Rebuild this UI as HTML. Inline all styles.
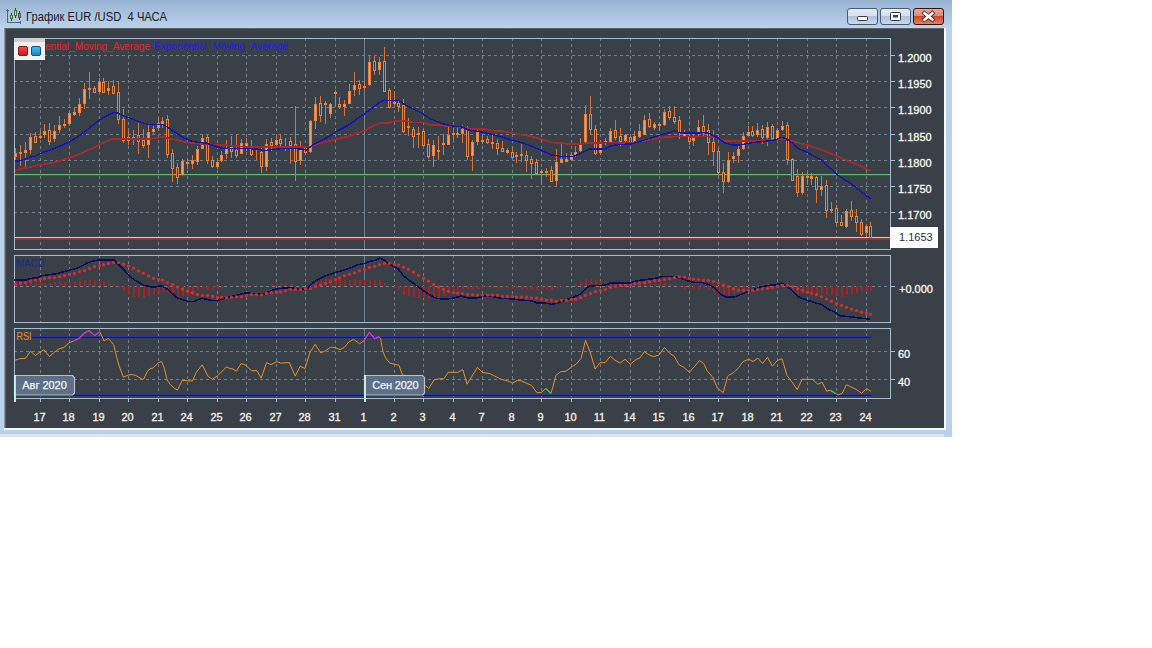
<!DOCTYPE html><html><head><meta charset="utf-8"><title>chart</title><style>
html,body{margin:0;padding:0;background:#fff;width:1152px;height:648px;overflow:hidden}
svg{position:absolute;left:0;top:0;font-family:"Liberation Sans",sans-serif}
</style></head><body>
<svg width="1152" height="648" viewBox="0 0 1152 648">
<defs>
<linearGradient id="tb" x1="0" y1="0" x2="0" y2="1"><stop offset="0" stop-color="#98b3d2"/><stop offset="1" stop-color="#bcd4ec"/></linearGradient>
<linearGradient id="btn" x1="0" y1="0" x2="0" y2="1"><stop offset="0" stop-color="#e4edf7"/><stop offset="0.45" stop-color="#d3e0ee"/><stop offset="0.5" stop-color="#aec2d8"/><stop offset="1" stop-color="#c9dbee"/></linearGradient>
<linearGradient id="cls" x1="0" y1="0" x2="0" y2="1"><stop offset="0" stop-color="#eca898"/><stop offset="0.45" stop-color="#e08a74"/><stop offset="0.5" stop-color="#c84a2c"/><stop offset="1" stop-color="#e0866a"/></linearGradient>
<linearGradient id="rsq" x1="0" y1="0" x2="0" y2="1"><stop offset="0" stop-color="#f05050"/><stop offset="1" stop-color="#c01818"/></linearGradient>
<linearGradient id="bsq" x1="0" y1="0" x2="0" y2="1"><stop offset="0" stop-color="#48bef2"/><stop offset="1" stop-color="#1684cc"/></linearGradient>
</defs>
<rect x="0" y="0" width="952" height="437" fill="#b9d1ea"/>
<rect x="0" y="0" width="952" height="29" fill="url(#tb)"/>
<rect x="0" y="434" width="944" height="3" fill="#dde7f1"/>
<rect x="4" y="28" width="942" height="402" fill="#f6f8fa"/>
<rect x="4" y="28" width="940" height="400" fill="#8a9098"/>
<rect x="5" y="28" width="939" height="400" fill="#5c6168"/>
<rect x="6" y="29" width="938" height="399" fill="#3a4048"/>
<g shape-rendering="crispEdges"><line x1="40.5" y1="38" x2="40.5" y2="249" stroke="#717e8b" stroke-width="1" stroke-dasharray="3 3"/><line x1="40.5" y1="255" x2="40.5" y2="322" stroke="#717e8b" stroke-width="1" stroke-dasharray="3 3"/><line x1="40.5" y1="328" x2="40.5" y2="398" stroke="#717e8b" stroke-width="1" stroke-dasharray="3 3"/><line x1="69.5" y1="38" x2="69.5" y2="249" stroke="#717e8b" stroke-width="1" stroke-dasharray="3 3"/><line x1="69.5" y1="255" x2="69.5" y2="322" stroke="#717e8b" stroke-width="1" stroke-dasharray="3 3"/><line x1="69.5" y1="328" x2="69.5" y2="398" stroke="#717e8b" stroke-width="1" stroke-dasharray="3 3"/><line x1="99.5" y1="38" x2="99.5" y2="249" stroke="#717e8b" stroke-width="1" stroke-dasharray="3 3"/><line x1="99.5" y1="255" x2="99.5" y2="322" stroke="#717e8b" stroke-width="1" stroke-dasharray="3 3"/><line x1="99.5" y1="328" x2="99.5" y2="398" stroke="#717e8b" stroke-width="1" stroke-dasharray="3 3"/><line x1="128.5" y1="38" x2="128.5" y2="249" stroke="#717e8b" stroke-width="1" stroke-dasharray="3 3"/><line x1="128.5" y1="255" x2="128.5" y2="322" stroke="#717e8b" stroke-width="1" stroke-dasharray="3 3"/><line x1="128.5" y1="328" x2="128.5" y2="398" stroke="#717e8b" stroke-width="1" stroke-dasharray="3 3"/><line x1="158.5" y1="38" x2="158.5" y2="249" stroke="#717e8b" stroke-width="1" stroke-dasharray="3 3"/><line x1="158.5" y1="255" x2="158.5" y2="322" stroke="#717e8b" stroke-width="1" stroke-dasharray="3 3"/><line x1="158.5" y1="328" x2="158.5" y2="398" stroke="#717e8b" stroke-width="1" stroke-dasharray="3 3"/><line x1="187.5" y1="38" x2="187.5" y2="249" stroke="#717e8b" stroke-width="1" stroke-dasharray="3 3"/><line x1="187.5" y1="255" x2="187.5" y2="322" stroke="#717e8b" stroke-width="1" stroke-dasharray="3 3"/><line x1="187.5" y1="328" x2="187.5" y2="398" stroke="#717e8b" stroke-width="1" stroke-dasharray="3 3"/><line x1="217.5" y1="38" x2="217.5" y2="249" stroke="#717e8b" stroke-width="1" stroke-dasharray="3 3"/><line x1="217.5" y1="255" x2="217.5" y2="322" stroke="#717e8b" stroke-width="1" stroke-dasharray="3 3"/><line x1="217.5" y1="328" x2="217.5" y2="398" stroke="#717e8b" stroke-width="1" stroke-dasharray="3 3"/><line x1="246.5" y1="38" x2="246.5" y2="249" stroke="#717e8b" stroke-width="1" stroke-dasharray="3 3"/><line x1="246.5" y1="255" x2="246.5" y2="322" stroke="#717e8b" stroke-width="1" stroke-dasharray="3 3"/><line x1="246.5" y1="328" x2="246.5" y2="398" stroke="#717e8b" stroke-width="1" stroke-dasharray="3 3"/><line x1="276.5" y1="38" x2="276.5" y2="249" stroke="#717e8b" stroke-width="1" stroke-dasharray="3 3"/><line x1="276.5" y1="255" x2="276.5" y2="322" stroke="#717e8b" stroke-width="1" stroke-dasharray="3 3"/><line x1="276.5" y1="328" x2="276.5" y2="398" stroke="#717e8b" stroke-width="1" stroke-dasharray="3 3"/><line x1="305.5" y1="38" x2="305.5" y2="249" stroke="#717e8b" stroke-width="1" stroke-dasharray="3 3"/><line x1="305.5" y1="255" x2="305.5" y2="322" stroke="#717e8b" stroke-width="1" stroke-dasharray="3 3"/><line x1="305.5" y1="328" x2="305.5" y2="398" stroke="#717e8b" stroke-width="1" stroke-dasharray="3 3"/><line x1="335.5" y1="38" x2="335.5" y2="249" stroke="#717e8b" stroke-width="1" stroke-dasharray="3 3"/><line x1="335.5" y1="255" x2="335.5" y2="322" stroke="#717e8b" stroke-width="1" stroke-dasharray="3 3"/><line x1="335.5" y1="328" x2="335.5" y2="398" stroke="#717e8b" stroke-width="1" stroke-dasharray="3 3"/><line x1="364.5" y1="38" x2="364.5" y2="249" stroke="#6d8294" stroke-width="1"/><line x1="364.5" y1="255" x2="364.5" y2="322" stroke="#6d8294" stroke-width="1"/><line x1="364.5" y1="328" x2="364.5" y2="398" stroke="#6d8294" stroke-width="1"/><line x1="394.5" y1="38" x2="394.5" y2="249" stroke="#717e8b" stroke-width="1" stroke-dasharray="3 3"/><line x1="394.5" y1="255" x2="394.5" y2="322" stroke="#717e8b" stroke-width="1" stroke-dasharray="3 3"/><line x1="394.5" y1="328" x2="394.5" y2="398" stroke="#717e8b" stroke-width="1" stroke-dasharray="3 3"/><line x1="423.5" y1="38" x2="423.5" y2="249" stroke="#717e8b" stroke-width="1" stroke-dasharray="3 3"/><line x1="423.5" y1="255" x2="423.5" y2="322" stroke="#717e8b" stroke-width="1" stroke-dasharray="3 3"/><line x1="423.5" y1="328" x2="423.5" y2="398" stroke="#717e8b" stroke-width="1" stroke-dasharray="3 3"/><line x1="453.5" y1="38" x2="453.5" y2="249" stroke="#717e8b" stroke-width="1" stroke-dasharray="3 3"/><line x1="453.5" y1="255" x2="453.5" y2="322" stroke="#717e8b" stroke-width="1" stroke-dasharray="3 3"/><line x1="453.5" y1="328" x2="453.5" y2="398" stroke="#717e8b" stroke-width="1" stroke-dasharray="3 3"/><line x1="482.5" y1="38" x2="482.5" y2="249" stroke="#717e8b" stroke-width="1" stroke-dasharray="3 3"/><line x1="482.5" y1="255" x2="482.5" y2="322" stroke="#717e8b" stroke-width="1" stroke-dasharray="3 3"/><line x1="482.5" y1="328" x2="482.5" y2="398" stroke="#717e8b" stroke-width="1" stroke-dasharray="3 3"/><line x1="512.5" y1="38" x2="512.5" y2="249" stroke="#717e8b" stroke-width="1" stroke-dasharray="3 3"/><line x1="512.5" y1="255" x2="512.5" y2="322" stroke="#717e8b" stroke-width="1" stroke-dasharray="3 3"/><line x1="512.5" y1="328" x2="512.5" y2="398" stroke="#717e8b" stroke-width="1" stroke-dasharray="3 3"/><line x1="541.5" y1="38" x2="541.5" y2="249" stroke="#717e8b" stroke-width="1" stroke-dasharray="3 3"/><line x1="541.5" y1="255" x2="541.5" y2="322" stroke="#717e8b" stroke-width="1" stroke-dasharray="3 3"/><line x1="541.5" y1="328" x2="541.5" y2="398" stroke="#717e8b" stroke-width="1" stroke-dasharray="3 3"/><line x1="571.5" y1="38" x2="571.5" y2="249" stroke="#717e8b" stroke-width="1" stroke-dasharray="3 3"/><line x1="571.5" y1="255" x2="571.5" y2="322" stroke="#717e8b" stroke-width="1" stroke-dasharray="3 3"/><line x1="571.5" y1="328" x2="571.5" y2="398" stroke="#717e8b" stroke-width="1" stroke-dasharray="3 3"/><line x1="600.5" y1="38" x2="600.5" y2="249" stroke="#717e8b" stroke-width="1" stroke-dasharray="3 3"/><line x1="600.5" y1="255" x2="600.5" y2="322" stroke="#717e8b" stroke-width="1" stroke-dasharray="3 3"/><line x1="600.5" y1="328" x2="600.5" y2="398" stroke="#717e8b" stroke-width="1" stroke-dasharray="3 3"/><line x1="630.5" y1="38" x2="630.5" y2="249" stroke="#717e8b" stroke-width="1" stroke-dasharray="3 3"/><line x1="630.5" y1="255" x2="630.5" y2="322" stroke="#717e8b" stroke-width="1" stroke-dasharray="3 3"/><line x1="630.5" y1="328" x2="630.5" y2="398" stroke="#717e8b" stroke-width="1" stroke-dasharray="3 3"/><line x1="659.5" y1="38" x2="659.5" y2="249" stroke="#717e8b" stroke-width="1" stroke-dasharray="3 3"/><line x1="659.5" y1="255" x2="659.5" y2="322" stroke="#717e8b" stroke-width="1" stroke-dasharray="3 3"/><line x1="659.5" y1="328" x2="659.5" y2="398" stroke="#717e8b" stroke-width="1" stroke-dasharray="3 3"/><line x1="689.5" y1="38" x2="689.5" y2="249" stroke="#717e8b" stroke-width="1" stroke-dasharray="3 3"/><line x1="689.5" y1="255" x2="689.5" y2="322" stroke="#717e8b" stroke-width="1" stroke-dasharray="3 3"/><line x1="689.5" y1="328" x2="689.5" y2="398" stroke="#717e8b" stroke-width="1" stroke-dasharray="3 3"/><line x1="718.5" y1="38" x2="718.5" y2="249" stroke="#717e8b" stroke-width="1" stroke-dasharray="3 3"/><line x1="718.5" y1="255" x2="718.5" y2="322" stroke="#717e8b" stroke-width="1" stroke-dasharray="3 3"/><line x1="718.5" y1="328" x2="718.5" y2="398" stroke="#717e8b" stroke-width="1" stroke-dasharray="3 3"/><line x1="748.5" y1="38" x2="748.5" y2="249" stroke="#717e8b" stroke-width="1" stroke-dasharray="3 3"/><line x1="748.5" y1="255" x2="748.5" y2="322" stroke="#717e8b" stroke-width="1" stroke-dasharray="3 3"/><line x1="748.5" y1="328" x2="748.5" y2="398" stroke="#717e8b" stroke-width="1" stroke-dasharray="3 3"/><line x1="777.5" y1="38" x2="777.5" y2="249" stroke="#717e8b" stroke-width="1" stroke-dasharray="3 3"/><line x1="777.5" y1="255" x2="777.5" y2="322" stroke="#717e8b" stroke-width="1" stroke-dasharray="3 3"/><line x1="777.5" y1="328" x2="777.5" y2="398" stroke="#717e8b" stroke-width="1" stroke-dasharray="3 3"/><line x1="807.5" y1="38" x2="807.5" y2="249" stroke="#717e8b" stroke-width="1" stroke-dasharray="3 3"/><line x1="807.5" y1="255" x2="807.5" y2="322" stroke="#717e8b" stroke-width="1" stroke-dasharray="3 3"/><line x1="807.5" y1="328" x2="807.5" y2="398" stroke="#717e8b" stroke-width="1" stroke-dasharray="3 3"/><line x1="836.5" y1="38" x2="836.5" y2="249" stroke="#717e8b" stroke-width="1" stroke-dasharray="3 3"/><line x1="836.5" y1="255" x2="836.5" y2="322" stroke="#717e8b" stroke-width="1" stroke-dasharray="3 3"/><line x1="836.5" y1="328" x2="836.5" y2="398" stroke="#717e8b" stroke-width="1" stroke-dasharray="3 3"/><line x1="866.5" y1="38" x2="866.5" y2="249" stroke="#717e8b" stroke-width="1" stroke-dasharray="3 3"/><line x1="866.5" y1="255" x2="866.5" y2="322" stroke="#717e8b" stroke-width="1" stroke-dasharray="3 3"/><line x1="866.5" y1="328" x2="866.5" y2="398" stroke="#717e8b" stroke-width="1" stroke-dasharray="3 3"/><line x1="14" y1="55.5" x2="890" y2="55.5" stroke="#717e8b" stroke-dasharray="3 3"/><line x1="890" y1="55.5" x2="895" y2="55.5" stroke="#a8bccf"/><line x1="14" y1="81.5" x2="890" y2="81.5" stroke="#717e8b" stroke-dasharray="3 3"/><line x1="890" y1="81.5" x2="895" y2="81.5" stroke="#a8bccf"/><line x1="14" y1="107.5" x2="890" y2="107.5" stroke="#717e8b" stroke-dasharray="3 3"/><line x1="890" y1="107.5" x2="895" y2="107.5" stroke="#a8bccf"/><line x1="14" y1="134.5" x2="890" y2="134.5" stroke="#717e8b" stroke-dasharray="3 3"/><line x1="890" y1="134.5" x2="895" y2="134.5" stroke="#a8bccf"/><line x1="14" y1="160.5" x2="890" y2="160.5" stroke="#717e8b" stroke-dasharray="3 3"/><line x1="890" y1="160.5" x2="895" y2="160.5" stroke="#a8bccf"/><line x1="14" y1="186.5" x2="890" y2="186.5" stroke="#717e8b" stroke-dasharray="3 3"/><line x1="890" y1="186.5" x2="895" y2="186.5" stroke="#a8bccf"/><line x1="14" y1="212.5" x2="890" y2="212.5" stroke="#717e8b" stroke-dasharray="3 3"/><line x1="890" y1="212.5" x2="895" y2="212.5" stroke="#a8bccf"/><line x1="14" y1="286.5" x2="890" y2="286.5" stroke="#717e8b" stroke-dasharray="3 3"/><line x1="890" y1="286.5" x2="895" y2="286.5" stroke="#a8bccf"/><line x1="14" y1="351.5" x2="890" y2="351.5" stroke="#717e8b" stroke-dasharray="3 3"/><line x1="890" y1="351.5" x2="895" y2="351.5" stroke="#a8bccf"/><line x1="14" y1="379.5" x2="890" y2="379.5" stroke="#717e8b" stroke-dasharray="3 3"/><line x1="890" y1="379.5" x2="895" y2="379.5" stroke="#a8bccf"/><rect x="14.5" y="38.5" width="876" height="211" fill="none" stroke="#a8bccf"/><rect x="14.5" y="255.5" width="876" height="67" fill="none" stroke="#a8bccf"/><rect x="14.5" y="328.5" width="876" height="70" fill="none" stroke="#a8bccf"/><line x1="40.5" y1="398" x2="40.5" y2="402" stroke="#a8bccf"/><line x1="69.5" y1="398" x2="69.5" y2="402" stroke="#a8bccf"/><line x1="99.5" y1="398" x2="99.5" y2="402" stroke="#a8bccf"/><line x1="128.5" y1="398" x2="128.5" y2="402" stroke="#a8bccf"/><line x1="158.5" y1="398" x2="158.5" y2="402" stroke="#a8bccf"/><line x1="187.5" y1="398" x2="187.5" y2="402" stroke="#a8bccf"/><line x1="217.5" y1="398" x2="217.5" y2="402" stroke="#a8bccf"/><line x1="246.5" y1="398" x2="246.5" y2="402" stroke="#a8bccf"/><line x1="276.5" y1="398" x2="276.5" y2="402" stroke="#a8bccf"/><line x1="305.5" y1="398" x2="305.5" y2="402" stroke="#a8bccf"/><line x1="335.5" y1="398" x2="335.5" y2="402" stroke="#a8bccf"/><line x1="364.5" y1="398" x2="364.5" y2="402" stroke="#a8bccf"/><line x1="394.5" y1="398" x2="394.5" y2="402" stroke="#a8bccf"/><line x1="423.5" y1="398" x2="423.5" y2="402" stroke="#a8bccf"/><line x1="453.5" y1="398" x2="453.5" y2="402" stroke="#a8bccf"/><line x1="482.5" y1="398" x2="482.5" y2="402" stroke="#a8bccf"/><line x1="512.5" y1="398" x2="512.5" y2="402" stroke="#a8bccf"/><line x1="541.5" y1="398" x2="541.5" y2="402" stroke="#a8bccf"/><line x1="571.5" y1="398" x2="571.5" y2="402" stroke="#a8bccf"/><line x1="600.5" y1="398" x2="600.5" y2="402" stroke="#a8bccf"/><line x1="630.5" y1="398" x2="630.5" y2="402" stroke="#a8bccf"/><line x1="659.5" y1="398" x2="659.5" y2="402" stroke="#a8bccf"/><line x1="689.5" y1="398" x2="689.5" y2="402" stroke="#a8bccf"/><line x1="718.5" y1="398" x2="718.5" y2="402" stroke="#a8bccf"/><line x1="748.5" y1="398" x2="748.5" y2="402" stroke="#a8bccf"/><line x1="777.5" y1="398" x2="777.5" y2="402" stroke="#a8bccf"/><line x1="807.5" y1="398" x2="807.5" y2="402" stroke="#a8bccf"/><line x1="836.5" y1="398" x2="836.5" y2="402" stroke="#a8bccf"/><line x1="866.5" y1="398" x2="866.5" y2="402" stroke="#a8bccf"/></g>
<g shape-rendering="crispEdges">
<rect x="15" y="174" width="875" height="1" fill="#56c262"/><rect x="15" y="175" width="875" height="1" fill="#147a18"/>
<rect x="15" y="237" width="875" height="1" fill="#e8c8c8"/>
<rect x="15" y="238" width="875" height="2" fill="#a82a2a"/>
</g>
<g shape-rendering="crispEdges"><rect x="15" y="148" width="1" height="13" fill="#d8743a"/><rect x="14" y="153" width="3" height="4" fill="#e8823e"/><rect x="15" y="154" width="1" height="2" fill="#f4a060"/><rect x="20" y="145" width="1" height="21" fill="#d8743a"/><rect x="19" y="152" width="3" height="2" fill="#e8823e"/><rect x="25" y="142" width="1" height="27" fill="#d8743a"/><rect x="24" y="150" width="3" height="3" fill="#e8823e"/><rect x="25" y="151" width="1" height="1" fill="#f4a060"/><rect x="30" y="133" width="1" height="21" fill="#d8743a"/><rect x="29" y="137" width="3" height="13" fill="#e8823e"/><rect x="30" y="138" width="1" height="11" fill="#f4a060"/><rect x="35" y="132" width="1" height="11" fill="#d8743a"/><rect x="34" y="136" width="3" height="7" fill="#e8823e"/><rect x="35" y="137" width="1" height="5" fill="#3a4048"/><rect x="40" y="131" width="1" height="8" fill="#d8743a"/><rect x="39" y="136" width="3" height="2" fill="#e8823e"/><rect x="44" y="124" width="1" height="14" fill="#d8743a"/><rect x="43" y="131" width="3" height="4" fill="#e8823e"/><rect x="44" y="132" width="1" height="2" fill="#f4a060"/><rect x="49" y="123" width="1" height="22" fill="#d8743a"/><rect x="48" y="130" width="3" height="12" fill="#e8823e"/><rect x="49" y="131" width="1" height="10" fill="#3a4048"/><rect x="54" y="125" width="1" height="17" fill="#d8743a"/><rect x="53" y="131" width="3" height="8" fill="#e8823e"/><rect x="54" y="132" width="1" height="6" fill="#f4a060"/><rect x="59" y="116" width="1" height="17" fill="#d8743a"/><rect x="58" y="125" width="3" height="5" fill="#e8823e"/><rect x="59" y="126" width="1" height="3" fill="#f4a060"/><rect x="64" y="119" width="1" height="9" fill="#d8743a"/><rect x="63" y="124" width="3" height="2" fill="#e8823e"/><rect x="69" y="111" width="1" height="15" fill="#d8743a"/><rect x="68" y="113" width="3" height="11" fill="#e8823e"/><rect x="69" y="114" width="1" height="9" fill="#f4a060"/><rect x="74" y="108" width="1" height="8" fill="#d8743a"/><rect x="73" y="112" width="3" height="3" fill="#e8823e"/><rect x="74" y="113" width="1" height="1" fill="#f4a060"/><rect x="79" y="98" width="1" height="18" fill="#d8743a"/><rect x="78" y="104" width="3" height="9" fill="#e8823e"/><rect x="79" y="105" width="1" height="7" fill="#f4a060"/><rect x="84" y="83" width="1" height="26" fill="#d8743a"/><rect x="83" y="89" width="3" height="15" fill="#e8823e"/><rect x="84" y="90" width="1" height="13" fill="#f4a060"/><rect x="89" y="72" width="1" height="27" fill="#d8743a"/><rect x="88" y="88" width="3" height="2" fill="#e8823e"/><rect x="94" y="86" width="1" height="6" fill="#d8743a"/><rect x="93" y="88" width="3" height="5" fill="#e8823e"/><rect x="94" y="89" width="1" height="3" fill="#3a4048"/><rect x="99" y="78" width="1" height="15" fill="#d8743a"/><rect x="98" y="82" width="3" height="10" fill="#e8823e"/><rect x="99" y="83" width="1" height="8" fill="#f4a060"/><rect x="103" y="78" width="1" height="15" fill="#d8743a"/><rect x="102" y="82" width="3" height="11" fill="#e8823e"/><rect x="103" y="83" width="1" height="9" fill="#3a4048"/><rect x="108" y="81" width="1" height="14" fill="#d8743a"/><rect x="107" y="88" width="3" height="3" fill="#e8823e"/><rect x="108" y="89" width="1" height="1" fill="#f4a060"/><rect x="113" y="80" width="1" height="14" fill="#d8743a"/><rect x="112" y="86" width="3" height="8" fill="#e8823e"/><rect x="113" y="87" width="1" height="6" fill="#3a4048"/><rect x="118" y="81" width="1" height="43" fill="#d8743a"/><rect x="117" y="92" width="3" height="28" fill="#e8823e"/><rect x="118" y="93" width="1" height="26" fill="#3a4048"/><rect x="123" y="109" width="1" height="34" fill="#d8743a"/><rect x="122" y="119" width="3" height="22" fill="#e8823e"/><rect x="123" y="120" width="1" height="20" fill="#3a4048"/><rect x="128" y="130" width="1" height="15" fill="#d8743a"/><rect x="127" y="137" width="3" height="4" fill="#e8823e"/><rect x="128" y="138" width="1" height="2" fill="#f4a060"/><rect x="133" y="130" width="1" height="15" fill="#d8743a"/><rect x="132" y="137" width="3" height="3" fill="#e8823e"/><rect x="133" y="138" width="1" height="1" fill="#f4a060"/><rect x="138" y="123" width="1" height="31" fill="#d8743a"/><rect x="137" y="135" width="3" height="7" fill="#e8823e"/><rect x="138" y="136" width="1" height="5" fill="#3a4048"/><rect x="143" y="129" width="1" height="19" fill="#d8743a"/><rect x="142" y="140" width="3" height="6" fill="#e8823e"/><rect x="143" y="141" width="1" height="4" fill="#3a4048"/><rect x="148" y="125" width="1" height="33" fill="#d8743a"/><rect x="147" y="132" width="3" height="13" fill="#e8823e"/><rect x="148" y="133" width="1" height="11" fill="#f4a060"/><rect x="153" y="126" width="1" height="8" fill="#d8743a"/><rect x="152" y="129" width="3" height="3" fill="#e8823e"/><rect x="153" y="130" width="1" height="1" fill="#f4a060"/><rect x="158" y="118" width="1" height="12" fill="#d8743a"/><rect x="157" y="123" width="3" height="5" fill="#e8823e"/><rect x="158" y="124" width="1" height="3" fill="#f4a060"/><rect x="162" y="117" width="1" height="11" fill="#d8743a"/><rect x="161" y="121" width="3" height="3" fill="#e8823e"/><rect x="162" y="122" width="1" height="1" fill="#f4a060"/><rect x="167" y="115" width="1" height="43" fill="#d8743a"/><rect x="166" y="119" width="3" height="36" fill="#e8823e"/><rect x="167" y="120" width="1" height="34" fill="#3a4048"/><rect x="172" y="149" width="1" height="33" fill="#d8743a"/><rect x="171" y="153" width="3" height="16" fill="#e8823e"/><rect x="172" y="154" width="1" height="14" fill="#3a4048"/><rect x="177" y="163" width="1" height="21" fill="#d8743a"/><rect x="176" y="167" width="3" height="11" fill="#e8823e"/><rect x="177" y="168" width="1" height="9" fill="#3a4048"/><rect x="182" y="159" width="1" height="17" fill="#d8743a"/><rect x="181" y="161" width="3" height="14" fill="#e8823e"/><rect x="182" y="162" width="1" height="12" fill="#f4a060"/><rect x="187" y="158" width="1" height="11" fill="#d8743a"/><rect x="186" y="162" width="3" height="2" fill="#e8823e"/><rect x="192" y="155" width="1" height="14" fill="#d8743a"/><rect x="191" y="160" width="3" height="4" fill="#e8823e"/><rect x="192" y="161" width="1" height="2" fill="#f4a060"/><rect x="197" y="146" width="1" height="19" fill="#d8743a"/><rect x="196" y="149" width="3" height="13" fill="#e8823e"/><rect x="197" y="150" width="1" height="11" fill="#f4a060"/><rect x="202" y="134" width="1" height="15" fill="#d8743a"/><rect x="201" y="138" width="3" height="11" fill="#e8823e"/><rect x="202" y="139" width="1" height="9" fill="#f4a060"/><rect x="207" y="135" width="1" height="29" fill="#d8743a"/><rect x="206" y="137" width="3" height="24" fill="#e8823e"/><rect x="207" y="138" width="1" height="22" fill="#3a4048"/><rect x="212" y="156" width="1" height="12" fill="#d8743a"/><rect x="211" y="160" width="3" height="7" fill="#e8823e"/><rect x="212" y="161" width="1" height="5" fill="#3a4048"/><rect x="217" y="158" width="1" height="11" fill="#d8743a"/><rect x="216" y="162" width="3" height="5" fill="#e8823e"/><rect x="217" y="163" width="1" height="3" fill="#f4a060"/><rect x="221" y="151" width="1" height="11" fill="#d8743a"/><rect x="220" y="155" width="3" height="6" fill="#e8823e"/><rect x="221" y="156" width="1" height="4" fill="#f4a060"/><rect x="226" y="140" width="1" height="19" fill="#d8743a"/><rect x="225" y="148" width="3" height="6" fill="#e8823e"/><rect x="226" y="149" width="1" height="4" fill="#f4a060"/><rect x="231" y="136" width="1" height="22" fill="#d8743a"/><rect x="230" y="147" width="3" height="5" fill="#e8823e"/><rect x="231" y="148" width="1" height="3" fill="#3a4048"/><rect x="236" y="134" width="1" height="24" fill="#d8743a"/><rect x="235" y="150" width="3" height="6" fill="#e8823e"/><rect x="236" y="151" width="1" height="4" fill="#3a4048"/><rect x="241" y="139" width="1" height="15" fill="#d8743a"/><rect x="240" y="143" width="3" height="11" fill="#e8823e"/><rect x="241" y="144" width="1" height="9" fill="#f4a060"/><rect x="246" y="138" width="1" height="13" fill="#d8743a"/><rect x="245" y="143" width="3" height="4" fill="#e8823e"/><rect x="246" y="144" width="1" height="2" fill="#f4a060"/><rect x="251" y="140" width="1" height="16" fill="#d8743a"/><rect x="250" y="146" width="3" height="9" fill="#e8823e"/><rect x="251" y="147" width="1" height="7" fill="#3a4048"/><rect x="256" y="146" width="1" height="14" fill="#d8743a"/><rect x="255" y="146" width="3" height="2" fill="#e8823e"/><rect x="261" y="146" width="1" height="27" fill="#d8743a"/><rect x="260" y="152" width="3" height="15" fill="#e8823e"/><rect x="261" y="153" width="1" height="13" fill="#3a4048"/><rect x="266" y="139" width="1" height="32" fill="#d8743a"/><rect x="265" y="144" width="3" height="23" fill="#e8823e"/><rect x="266" y="145" width="1" height="21" fill="#f4a060"/><rect x="271" y="138" width="1" height="13" fill="#d8743a"/><rect x="270" y="142" width="3" height="4" fill="#e8823e"/><rect x="271" y="143" width="1" height="2" fill="#3a4048"/><rect x="276" y="135" width="1" height="11" fill="#d8743a"/><rect x="275" y="140" width="3" height="5" fill="#e8823e"/><rect x="276" y="141" width="1" height="3" fill="#f4a060"/><rect x="280" y="134" width="1" height="13" fill="#d8743a"/><rect x="279" y="139" width="3" height="5" fill="#e8823e"/><rect x="280" y="140" width="1" height="3" fill="#3a4048"/><rect x="285" y="138" width="1" height="13" fill="#d8743a"/><rect x="284" y="147" width="3" height="2" fill="#e8823e"/><rect x="290" y="137" width="1" height="27" fill="#d8743a"/><rect x="289" y="141" width="3" height="5" fill="#e8823e"/><rect x="290" y="142" width="1" height="3" fill="#3a4048"/><rect x="295" y="106" width="1" height="75" fill="#d8743a"/><rect x="294" y="144" width="3" height="18" fill="#e8823e"/><rect x="295" y="145" width="1" height="16" fill="#3a4048"/><rect x="300" y="141" width="1" height="24" fill="#d8743a"/><rect x="299" y="146" width="3" height="15" fill="#e8823e"/><rect x="300" y="147" width="1" height="13" fill="#f4a060"/><rect x="305" y="146" width="1" height="9" fill="#d8743a"/><rect x="304" y="147" width="3" height="6" fill="#e8823e"/><rect x="305" y="148" width="1" height="4" fill="#3a4048"/><rect x="310" y="120" width="1" height="33" fill="#d8743a"/><rect x="309" y="121" width="3" height="31" fill="#e8823e"/><rect x="310" y="122" width="1" height="29" fill="#f4a060"/><rect x="315" y="97" width="1" height="32" fill="#d8743a"/><rect x="314" y="104" width="3" height="17" fill="#e8823e"/><rect x="315" y="105" width="1" height="15" fill="#f4a060"/><rect x="320" y="96" width="1" height="26" fill="#d8743a"/><rect x="319" y="103" width="3" height="13" fill="#e8823e"/><rect x="320" y="104" width="1" height="11" fill="#3a4048"/><rect x="325" y="101" width="1" height="23" fill="#d8743a"/><rect x="324" y="103" width="3" height="2" fill="#e8823e"/><rect x="330" y="103" width="1" height="15" fill="#d8743a"/><rect x="329" y="104" width="3" height="10" fill="#e8823e"/><rect x="330" y="105" width="1" height="8" fill="#f4a060"/><rect x="335" y="90" width="1" height="17" fill="#d8743a"/><rect x="334" y="92" width="3" height="2" fill="#e8823e"/><rect x="339" y="97" width="1" height="12" fill="#d8743a"/><rect x="338" y="104" width="3" height="3" fill="#e8823e"/><rect x="339" y="105" width="1" height="1" fill="#3a4048"/><rect x="344" y="100" width="1" height="16" fill="#d8743a"/><rect x="343" y="104" width="3" height="3" fill="#e8823e"/><rect x="344" y="105" width="1" height="1" fill="#f4a060"/><rect x="349" y="84" width="1" height="20" fill="#d8743a"/><rect x="348" y="91" width="3" height="13" fill="#e8823e"/><rect x="349" y="92" width="1" height="11" fill="#f4a060"/><rect x="354" y="72" width="1" height="24" fill="#d8743a"/><rect x="353" y="85" width="3" height="5" fill="#e8823e"/><rect x="354" y="86" width="1" height="3" fill="#f4a060"/><rect x="359" y="80" width="1" height="15" fill="#d8743a"/><rect x="358" y="84" width="3" height="5" fill="#e8823e"/><rect x="359" y="85" width="1" height="3" fill="#3a4048"/><rect x="364" y="81" width="1" height="9" fill="#d8743a"/><rect x="363" y="86" width="3" height="2" fill="#e8823e"/><rect x="369" y="55" width="1" height="31" fill="#d8743a"/><rect x="368" y="62" width="3" height="23" fill="#e8823e"/><rect x="369" y="63" width="1" height="21" fill="#f4a060"/><rect x="374" y="56" width="1" height="19" fill="#d8743a"/><rect x="373" y="61" width="3" height="10" fill="#e8823e"/><rect x="374" y="62" width="1" height="8" fill="#3a4048"/><rect x="379" y="57" width="1" height="18" fill="#d8743a"/><rect x="378" y="62" width="3" height="8" fill="#e8823e"/><rect x="379" y="63" width="1" height="6" fill="#f4a060"/><rect x="384" y="47" width="1" height="44" fill="#d8743a"/><rect x="383" y="61" width="3" height="31" fill="#e8823e"/><rect x="384" y="62" width="1" height="29" fill="#3a4048"/><rect x="389" y="88" width="1" height="20" fill="#d8743a"/><rect x="388" y="90" width="3" height="18" fill="#e8823e"/><rect x="389" y="91" width="1" height="16" fill="#3a4048"/><rect x="394" y="91" width="1" height="14" fill="#d8743a"/><rect x="393" y="102" width="3" height="2" fill="#e8823e"/><rect x="398" y="100" width="1" height="12" fill="#d8743a"/><rect x="397" y="103" width="3" height="4" fill="#e8823e"/><rect x="398" y="104" width="1" height="2" fill="#3a4048"/><rect x="403" y="99" width="1" height="34" fill="#d8743a"/><rect x="402" y="105" width="3" height="27" fill="#e8823e"/><rect x="403" y="106" width="1" height="25" fill="#3a4048"/><rect x="408" y="118" width="1" height="18" fill="#d8743a"/><rect x="407" y="126" width="3" height="2" fill="#e8823e"/><rect x="413" y="127" width="1" height="21" fill="#d8743a"/><rect x="412" y="129" width="3" height="8" fill="#e8823e"/><rect x="413" y="130" width="1" height="6" fill="#3a4048"/><rect x="418" y="127" width="1" height="21" fill="#d8743a"/><rect x="417" y="133" width="3" height="2" fill="#e8823e"/><rect x="423" y="129" width="1" height="17" fill="#d8743a"/><rect x="422" y="131" width="3" height="15" fill="#e8823e"/><rect x="423" y="132" width="1" height="13" fill="#3a4048"/><rect x="428" y="139" width="1" height="20" fill="#d8743a"/><rect x="427" y="144" width="3" height="13" fill="#e8823e"/><rect x="428" y="145" width="1" height="11" fill="#3a4048"/><rect x="433" y="140" width="1" height="27" fill="#d8743a"/><rect x="432" y="145" width="3" height="11" fill="#e8823e"/><rect x="433" y="146" width="1" height="9" fill="#f4a060"/><rect x="438" y="136" width="1" height="24" fill="#d8743a"/><rect x="437" y="150" width="3" height="2" fill="#e8823e"/><rect x="443" y="134" width="1" height="21" fill="#d8743a"/><rect x="442" y="143" width="3" height="2" fill="#e8823e"/><rect x="448" y="127" width="1" height="18" fill="#d8743a"/><rect x="447" y="135" width="3" height="10" fill="#e8823e"/><rect x="448" y="136" width="1" height="8" fill="#f4a060"/><rect x="453" y="127" width="1" height="13" fill="#d8743a"/><rect x="452" y="133" width="3" height="2" fill="#e8823e"/><rect x="457" y="127" width="1" height="11" fill="#d8743a"/><rect x="456" y="133" width="3" height="2" fill="#e8823e"/><rect x="462" y="125" width="1" height="18" fill="#d8743a"/><rect x="461" y="129" width="3" height="5" fill="#e8823e"/><rect x="462" y="130" width="1" height="3" fill="#f4a060"/><rect x="467" y="126" width="1" height="34" fill="#d8743a"/><rect x="466" y="128" width="3" height="29" fill="#e8823e"/><rect x="467" y="129" width="1" height="27" fill="#3a4048"/><rect x="472" y="140" width="1" height="31" fill="#d8743a"/><rect x="471" y="142" width="3" height="14" fill="#e8823e"/><rect x="472" y="143" width="1" height="12" fill="#f4a060"/><rect x="477" y="130" width="1" height="15" fill="#d8743a"/><rect x="476" y="132" width="3" height="10" fill="#e8823e"/><rect x="477" y="133" width="1" height="8" fill="#f4a060"/><rect x="482" y="136" width="1" height="8" fill="#d8743a"/><rect x="481" y="140" width="3" height="2" fill="#e8823e"/><rect x="487" y="136" width="1" height="8" fill="#d8743a"/><rect x="486" y="139" width="3" height="4" fill="#e8823e"/><rect x="487" y="140" width="1" height="2" fill="#3a4048"/><rect x="492" y="135" width="1" height="14" fill="#d8743a"/><rect x="491" y="142" width="3" height="2" fill="#e8823e"/><rect x="497" y="139" width="1" height="16" fill="#d8743a"/><rect x="496" y="143" width="3" height="6" fill="#e8823e"/><rect x="497" y="144" width="1" height="4" fill="#3a4048"/><rect x="502" y="141" width="1" height="11" fill="#d8743a"/><rect x="501" y="148" width="3" height="4" fill="#e8823e"/><rect x="502" y="149" width="1" height="2" fill="#3a4048"/><rect x="507" y="148" width="1" height="6" fill="#d8743a"/><rect x="506" y="150" width="3" height="3" fill="#e8823e"/><rect x="507" y="151" width="1" height="1" fill="#f4a060"/><rect x="512" y="147" width="1" height="11" fill="#d8743a"/><rect x="511" y="152" width="3" height="6" fill="#e8823e"/><rect x="512" y="153" width="1" height="4" fill="#3a4048"/><rect x="516" y="152" width="1" height="11" fill="#d8743a"/><rect x="515" y="155" width="3" height="2" fill="#e8823e"/><rect x="521" y="144" width="1" height="18" fill="#d8743a"/><rect x="520" y="154" width="3" height="2" fill="#e8823e"/><rect x="526" y="151" width="1" height="21" fill="#d8743a"/><rect x="525" y="155" width="3" height="6" fill="#e8823e"/><rect x="526" y="156" width="1" height="4" fill="#3a4048"/><rect x="531" y="156" width="1" height="23" fill="#d8743a"/><rect x="530" y="159" width="3" height="5" fill="#e8823e"/><rect x="531" y="160" width="1" height="3" fill="#3a4048"/><rect x="536" y="159" width="1" height="15" fill="#d8743a"/><rect x="535" y="162" width="3" height="12" fill="#e8823e"/><rect x="536" y="163" width="1" height="10" fill="#3a4048"/><rect x="541" y="169" width="1" height="15" fill="#d8743a"/><rect x="540" y="171" width="3" height="2" fill="#e8823e"/><rect x="546" y="168" width="1" height="9" fill="#d8743a"/><rect x="545" y="171" width="3" height="2" fill="#e8823e"/><rect x="551" y="166" width="1" height="16" fill="#d8743a"/><rect x="550" y="170" width="3" height="12" fill="#e8823e"/><rect x="551" y="171" width="1" height="10" fill="#3a4048"/><rect x="556" y="149" width="1" height="37" fill="#d8743a"/><rect x="555" y="162" width="3" height="19" fill="#e8823e"/><rect x="556" y="163" width="1" height="17" fill="#f4a060"/><rect x="561" y="144" width="1" height="19" fill="#d8743a"/><rect x="560" y="159" width="3" height="4" fill="#e8823e"/><rect x="561" y="160" width="1" height="2" fill="#f4a060"/><rect x="566" y="153" width="1" height="9" fill="#d8743a"/><rect x="565" y="159" width="3" height="3" fill="#e8823e"/><rect x="566" y="160" width="1" height="1" fill="#f4a060"/><rect x="571" y="152" width="1" height="9" fill="#d8743a"/><rect x="570" y="155" width="3" height="5" fill="#e8823e"/><rect x="571" y="156" width="1" height="3" fill="#f4a060"/><rect x="575" y="146" width="1" height="11" fill="#d8743a"/><rect x="574" y="152" width="3" height="3" fill="#e8823e"/><rect x="575" y="153" width="1" height="1" fill="#f4a060"/><rect x="580" y="138" width="1" height="14" fill="#d8743a"/><rect x="579" y="143" width="3" height="8" fill="#e8823e"/><rect x="580" y="144" width="1" height="6" fill="#f4a060"/><rect x="585" y="105" width="1" height="39" fill="#d8743a"/><rect x="584" y="114" width="3" height="28" fill="#e8823e"/><rect x="585" y="115" width="1" height="26" fill="#f4a060"/><rect x="590" y="96" width="1" height="39" fill="#d8743a"/><rect x="589" y="114" width="3" height="16" fill="#e8823e"/><rect x="590" y="115" width="1" height="14" fill="#3a4048"/><rect x="595" y="125" width="1" height="30" fill="#d8743a"/><rect x="594" y="129" width="3" height="25" fill="#e8823e"/><rect x="595" y="130" width="1" height="23" fill="#3a4048"/><rect x="600" y="140" width="1" height="15" fill="#d8743a"/><rect x="599" y="142" width="3" height="11" fill="#e8823e"/><rect x="600" y="143" width="1" height="9" fill="#f4a060"/><rect x="605" y="138" width="1" height="7" fill="#d8743a"/><rect x="604" y="141" width="3" height="2" fill="#e8823e"/><rect x="610" y="128" width="1" height="15" fill="#d8743a"/><rect x="609" y="131" width="3" height="11" fill="#e8823e"/><rect x="610" y="132" width="1" height="9" fill="#f4a060"/><rect x="615" y="120" width="1" height="20" fill="#d8743a"/><rect x="614" y="130" width="3" height="8" fill="#e8823e"/><rect x="615" y="131" width="1" height="6" fill="#3a4048"/><rect x="620" y="128" width="1" height="18" fill="#d8743a"/><rect x="619" y="136" width="3" height="6" fill="#e8823e"/><rect x="620" y="137" width="1" height="4" fill="#3a4048"/><rect x="625" y="134" width="1" height="9" fill="#d8743a"/><rect x="624" y="135" width="3" height="6" fill="#e8823e"/><rect x="625" y="136" width="1" height="4" fill="#f4a060"/><rect x="630" y="136" width="1" height="8" fill="#d8743a"/><rect x="629" y="137" width="3" height="6" fill="#e8823e"/><rect x="630" y="138" width="1" height="4" fill="#3a4048"/><rect x="634" y="131" width="1" height="11" fill="#d8743a"/><rect x="633" y="136" width="3" height="7" fill="#e8823e"/><rect x="634" y="137" width="1" height="5" fill="#f4a060"/><rect x="639" y="124" width="1" height="14" fill="#d8743a"/><rect x="638" y="131" width="3" height="6" fill="#e8823e"/><rect x="639" y="132" width="1" height="4" fill="#f4a060"/><rect x="644" y="115" width="1" height="20" fill="#d8743a"/><rect x="643" y="120" width="3" height="15" fill="#e8823e"/><rect x="644" y="121" width="1" height="13" fill="#f4a060"/><rect x="649" y="113" width="1" height="15" fill="#d8743a"/><rect x="648" y="119" width="3" height="8" fill="#e8823e"/><rect x="649" y="120" width="1" height="6" fill="#3a4048"/><rect x="654" y="122" width="1" height="8" fill="#d8743a"/><rect x="653" y="124" width="3" height="4" fill="#e8823e"/><rect x="654" y="125" width="1" height="2" fill="#f4a060"/><rect x="659" y="122" width="1" height="9" fill="#d8743a"/><rect x="658" y="124" width="3" height="2" fill="#e8823e"/><rect x="664" y="109" width="1" height="17" fill="#d8743a"/><rect x="663" y="112" width="3" height="13" fill="#e8823e"/><rect x="664" y="113" width="1" height="11" fill="#f4a060"/><rect x="669" y="106" width="1" height="14" fill="#d8743a"/><rect x="668" y="111" width="3" height="7" fill="#e8823e"/><rect x="669" y="112" width="1" height="5" fill="#3a4048"/><rect x="674" y="106" width="1" height="18" fill="#d8743a"/><rect x="673" y="117" width="3" height="5" fill="#e8823e"/><rect x="674" y="118" width="1" height="3" fill="#3a4048"/><rect x="679" y="116" width="1" height="23" fill="#d8743a"/><rect x="678" y="120" width="3" height="13" fill="#e8823e"/><rect x="679" y="121" width="1" height="11" fill="#3a4048"/><rect x="684" y="130" width="1" height="7" fill="#d8743a"/><rect x="683" y="133" width="3" height="4" fill="#e8823e"/><rect x="684" y="134" width="1" height="2" fill="#f4a060"/><rect x="689" y="134" width="1" height="11" fill="#d8743a"/><rect x="688" y="136" width="3" height="6" fill="#e8823e"/><rect x="689" y="137" width="1" height="4" fill="#3a4048"/><rect x="693" y="134" width="1" height="12" fill="#d8743a"/><rect x="692" y="136" width="3" height="5" fill="#e8823e"/><rect x="693" y="137" width="1" height="3" fill="#f4a060"/><rect x="698" y="120" width="1" height="17" fill="#d8743a"/><rect x="697" y="127" width="3" height="7" fill="#e8823e"/><rect x="698" y="128" width="1" height="5" fill="#f4a060"/><rect x="703" y="115" width="1" height="21" fill="#d8743a"/><rect x="702" y="126" width="3" height="6" fill="#e8823e"/><rect x="703" y="127" width="1" height="4" fill="#3a4048"/><rect x="708" y="124" width="1" height="31" fill="#d8743a"/><rect x="707" y="130" width="3" height="13" fill="#e8823e"/><rect x="708" y="131" width="1" height="11" fill="#3a4048"/><rect x="713" y="130" width="1" height="36" fill="#d8743a"/><rect x="712" y="142" width="3" height="10" fill="#e8823e"/><rect x="713" y="143" width="1" height="8" fill="#3a4048"/><rect x="718" y="148" width="1" height="28" fill="#d8743a"/><rect x="717" y="151" width="3" height="22" fill="#e8823e"/><rect x="718" y="152" width="1" height="20" fill="#3a4048"/><rect x="723" y="163" width="1" height="30" fill="#d8743a"/><rect x="722" y="172" width="3" height="10" fill="#e8823e"/><rect x="723" y="173" width="1" height="8" fill="#3a4048"/><rect x="728" y="152" width="1" height="31" fill="#d8743a"/><rect x="727" y="160" width="3" height="22" fill="#e8823e"/><rect x="728" y="161" width="1" height="20" fill="#f4a060"/><rect x="733" y="152" width="1" height="11" fill="#d8743a"/><rect x="732" y="156" width="3" height="3" fill="#e8823e"/><rect x="733" y="157" width="1" height="1" fill="#f4a060"/><rect x="738" y="145" width="1" height="18" fill="#d8743a"/><rect x="737" y="149" width="3" height="7" fill="#e8823e"/><rect x="738" y="150" width="1" height="5" fill="#f4a060"/><rect x="743" y="132" width="1" height="18" fill="#d8743a"/><rect x="742" y="136" width="3" height="13" fill="#e8823e"/><rect x="743" y="137" width="1" height="11" fill="#f4a060"/><rect x="748" y="126" width="1" height="10" fill="#d8743a"/><rect x="747" y="132" width="3" height="4" fill="#e8823e"/><rect x="748" y="133" width="1" height="2" fill="#f4a060"/><rect x="752" y="126" width="1" height="11" fill="#d8743a"/><rect x="751" y="131" width="3" height="5" fill="#e8823e"/><rect x="752" y="132" width="1" height="3" fill="#3a4048"/><rect x="757" y="123" width="1" height="14" fill="#d8743a"/><rect x="756" y="130" width="3" height="5" fill="#e8823e"/><rect x="757" y="131" width="1" height="3" fill="#f4a060"/><rect x="762" y="125" width="1" height="19" fill="#d8743a"/><rect x="761" y="129" width="3" height="9" fill="#e8823e"/><rect x="762" y="130" width="1" height="7" fill="#3a4048"/><rect x="767" y="122" width="1" height="24" fill="#d8743a"/><rect x="766" y="127" width="3" height="11" fill="#e8823e"/><rect x="767" y="128" width="1" height="9" fill="#f4a060"/><rect x="772" y="124" width="1" height="15" fill="#d8743a"/><rect x="771" y="126" width="3" height="13" fill="#e8823e"/><rect x="772" y="127" width="1" height="11" fill="#3a4048"/><rect x="777" y="128" width="1" height="11" fill="#d8743a"/><rect x="776" y="130" width="3" height="9" fill="#e8823e"/><rect x="777" y="131" width="1" height="7" fill="#f4a060"/><rect x="782" y="121" width="1" height="10" fill="#d8743a"/><rect x="781" y="126" width="3" height="4" fill="#e8823e"/><rect x="782" y="127" width="1" height="2" fill="#f4a060"/><rect x="787" y="122" width="1" height="43" fill="#d8743a"/><rect x="786" y="125" width="3" height="35" fill="#e8823e"/><rect x="787" y="126" width="1" height="33" fill="#3a4048"/><rect x="792" y="158" width="1" height="23" fill="#d8743a"/><rect x="791" y="159" width="3" height="22" fill="#e8823e"/><rect x="792" y="160" width="1" height="20" fill="#3a4048"/><rect x="797" y="169" width="1" height="28" fill="#d8743a"/><rect x="796" y="176" width="3" height="17" fill="#e8823e"/><rect x="797" y="177" width="1" height="15" fill="#3a4048"/><rect x="802" y="172" width="1" height="23" fill="#d8743a"/><rect x="801" y="176" width="3" height="17" fill="#e8823e"/><rect x="802" y="177" width="1" height="15" fill="#f4a060"/><rect x="807" y="172" width="1" height="12" fill="#d8743a"/><rect x="806" y="176" width="3" height="2" fill="#e8823e"/><rect x="811" y="173" width="1" height="12" fill="#d8743a"/><rect x="810" y="176" width="3" height="3" fill="#e8823e"/><rect x="811" y="177" width="1" height="1" fill="#f4a060"/><rect x="816" y="176" width="1" height="27" fill="#d8743a"/><rect x="815" y="177" width="3" height="13" fill="#e8823e"/><rect x="816" y="178" width="1" height="11" fill="#3a4048"/><rect x="821" y="176" width="1" height="20" fill="#d8743a"/><rect x="820" y="186" width="3" height="4" fill="#e8823e"/><rect x="821" y="187" width="1" height="2" fill="#f4a060"/><rect x="826" y="180" width="1" height="38" fill="#d8743a"/><rect x="825" y="185" width="3" height="26" fill="#e8823e"/><rect x="826" y="186" width="1" height="24" fill="#3a4048"/><rect x="831" y="202" width="1" height="10" fill="#d8743a"/><rect x="830" y="209" width="3" height="2" fill="#e8823e"/><rect x="836" y="205" width="1" height="20" fill="#d8743a"/><rect x="835" y="208" width="3" height="15" fill="#e8823e"/><rect x="836" y="209" width="1" height="13" fill="#3a4048"/><rect x="841" y="215" width="1" height="11" fill="#d8743a"/><rect x="840" y="222" width="3" height="4" fill="#e8823e"/><rect x="841" y="223" width="1" height="2" fill="#3a4048"/><rect x="846" y="209" width="1" height="19" fill="#d8743a"/><rect x="845" y="211" width="3" height="16" fill="#e8823e"/><rect x="846" y="212" width="1" height="14" fill="#f4a060"/><rect x="851" y="201" width="1" height="20" fill="#d8743a"/><rect x="850" y="210" width="3" height="7" fill="#e8823e"/><rect x="851" y="211" width="1" height="5" fill="#3a4048"/><rect x="856" y="209" width="1" height="23" fill="#d8743a"/><rect x="855" y="216" width="3" height="7" fill="#e8823e"/><rect x="856" y="217" width="1" height="5" fill="#3a4048"/><rect x="861" y="219" width="1" height="17" fill="#d8743a"/><rect x="860" y="222" width="3" height="13" fill="#e8823e"/><rect x="861" y="223" width="1" height="11" fill="#3a4048"/><rect x="866" y="224" width="1" height="13" fill="#d8743a"/><rect x="865" y="226" width="3" height="7" fill="#e8823e"/><rect x="866" y="227" width="1" height="5" fill="#f4a060"/><rect x="870" y="222" width="1" height="15" fill="#d8743a"/><rect x="869" y="226" width="3" height="12" fill="#e8823e"/><rect x="870" y="227" width="1" height="10" fill="#3a4048"/></g>
<polyline points="14.9,171 22.3,168.5 29.75,167.3 37.2,165.4 44.6,164.2 54.4,162.3 64.3,159.3 74.2,156.2 84.1,151.9 94,147.5 103.8,142.6 112.5,138.9 125,138.8 149.7,138.8 157.1,138.2 162,136.7 167,138 176.9,140.1 186.7,142.5 194.1,143.1 201.5,143.8 211.4,144.4 223.8,145 245,146.8 257.3,147 294.4,146.8 306.7,147.4 311.7,146.2 319.1,143.7 329,141.2 338.8,138.8 348.7,136.3 356.1,133.8 365,130.4 372.4,126.3 379.8,123 389.7,123 394.6,120.7 404.5,120.7 414.4,122.6 424.3,122.6 429.2,124.7 439.1,125.1 449,126.3 461.3,127.5 473.6,128.8 485,129 492.4,130.6 502.3,131.1 512.2,133.1 522,134.8 531.9,136.4 541.8,139.3 551.7,142.6 561.5,143 571.4,144.4 581.3,143.8 590,143 605,142.6 617.3,142.6 629.7,143 637.1,142 654.4,138.9 666.7,137 679.1,136.4 693.9,136.8 703.8,136.4 713.6,137 721,139.5 725,140.8 737.3,140.9 749.7,140.9 762,140.3 774.4,139.7 783,139.1 790,140.5 798.6,143 807.3,144.9 815.9,148.1 824.6,150.8 833.2,154.6 840.8,157.8 848.3,161.1 857,164.3 865.6,168.6 870.5,171.3" fill="none" stroke="#b02626" stroke-width="1.7" stroke-linejoin="round" shape-rendering="crispEdges"/>
<polyline points="14.9,161.1 21.1,160.7 27.3,158 34.7,156.2 42.1,152.5 50.7,150 59.4,146.3 69.3,142 79.1,135.8 89,128.4 98.9,120.4 106.3,116 113.7,112.3 118.6,113.3 123.6,116 131.2,118.7 137.3,120.9 143.5,123.1 149.7,124.6 163.3,124.6 169.4,128.3 176.9,133.3 184.3,138.2 191.7,141.3 199.1,142.5 206.5,143.1 213.9,145.6 221.3,148.1 231.2,148.7 245,148.6 257.3,149 263.5,150.5 269.7,149.9 282,148.6 294.4,148.6 304.3,149.3 306.7,149.9 311.7,145.6 319.1,141.9 329,136.3 338.8,130.1 348.7,125.2 356.1,119.6 365,113.5 372.4,107.8 379.8,102.2 383.5,100.7 399.6,100.7 404.5,104.7 414.4,109.6 424.3,114.6 430.4,118.9 442.8,123.8 453.9,126.3 462.5,126.9 468.7,130 476.1,131.2 485,132.6 492.4,134.6 502.3,137 512.2,140.5 522,142.6 531.9,146.3 541.8,150.6 551.7,154.9 559.1,156.2 573.9,156.2 581.3,153.1 590,148.8 605,148.8 612.4,145.4 622.3,144.4 632.2,143.8 642,140.7 651.9,137.7 661.8,134.6 669.2,132.7 675.4,130.9 679.1,132.7 691.4,133.1 703.8,132.7 708.7,133.3 713.6,135.8 718.6,138.3 725,143 732.4,145.2 739.8,144.9 749.7,143.1 762,141.5 774.4,140.3 781.8,137.2 786.7,139.1 792.9,143.4 798.6,148.6 807.3,152.4 813.8,156.2 822.4,160.5 828.9,167 836.4,174 844,179.4 852.6,184.8 861.3,191.8 870.5,198.9" fill="none" stroke="#1414b4" stroke-width="1.4" stroke-linejoin="round" shape-rendering="crispEdges"/>
<rect x="45" y="39" width="245" height="13" fill="#3a4048"/>
<rect x="14" y="38" width="31" height="22" fill="#f2f2f2"/>
<rect x="14" y="38" width="31" height="4" fill="#cfcfcf"/>
<rect x="18.5" y="46.5" width="9" height="9" rx="1.5" fill="url(#rsq)" stroke="#a01010" stroke-width="1"/>
<rect x="31.5" y="46.5" width="9" height="9" rx="1.5" fill="url(#bsq)" stroke="#10508c" stroke-width="1"/>
<text x="45" y="50" font-size="11" fill="#ee2222" textLength="105" lengthAdjust="spacingAndGlyphs">ential_Moving_Average</text>
<text x="154" y="50" font-size="11" fill="#1c1cee" textLength="134" lengthAdjust="spacingAndGlyphs">Exponential_Moving_Average</text>
<text x="898" y="62" font-size="11" fill="#f8f6f0" stroke="#f8f6f0" stroke-width="0.3">1.2000</text>
<text x="898" y="88" font-size="11" fill="#f8f6f0" stroke="#f8f6f0" stroke-width="0.3">1.1950</text>
<text x="898" y="114" font-size="11" fill="#f8f6f0" stroke="#f8f6f0" stroke-width="0.3">1.1900</text>
<text x="898" y="141" font-size="11" fill="#f8f6f0" stroke="#f8f6f0" stroke-width="0.3">1.1850</text>
<text x="898" y="167" font-size="11" fill="#f8f6f0" stroke="#f8f6f0" stroke-width="0.3">1.1800</text>
<text x="898" y="193" font-size="11" fill="#f8f6f0" stroke="#f8f6f0" stroke-width="0.3">1.1750</text>
<text x="898" y="219" font-size="11" fill="#f8f6f0" stroke="#f8f6f0" stroke-width="0.3">1.1700</text>
<rect x="890" y="227" width="48" height="21" fill="#ffffff"/>
<text x="899" y="241" font-size="11" fill="#2c2840">1.1653</text>
<g shape-rendering="crispEdges"><rect x="15" y="282" width="2" height="4" fill="#a42424"/><rect x="20" y="283" width="2" height="3" fill="#a42424"/><rect x="25" y="284" width="2" height="2" fill="#a42424"/><rect x="30" y="283" width="2" height="3" fill="#a42424"/><rect x="35" y="284" width="2" height="2" fill="#a42424"/><rect x="40" y="283" width="2" height="3" fill="#a42424"/><rect x="44" y="283" width="2" height="3" fill="#a42424"/><rect x="49" y="283" width="2" height="3" fill="#a42424"/><rect x="54" y="282" width="2" height="4" fill="#a42424"/><rect x="59" y="282" width="2" height="4" fill="#a42424"/><rect x="64" y="282" width="2" height="4" fill="#a42424"/><rect x="69" y="282" width="2" height="4" fill="#a42424"/><rect x="74" y="281" width="2" height="5" fill="#a42424"/><rect x="79" y="281" width="2" height="5" fill="#a42424"/><rect x="84" y="280" width="2" height="6" fill="#a42424"/><rect x="89" y="280" width="2" height="6" fill="#a42424"/><rect x="94" y="280" width="2" height="6" fill="#a42424"/><rect x="99" y="281" width="2" height="5" fill="#a42424"/><rect x="103" y="282" width="2" height="4" fill="#a42424"/><rect x="108" y="283" width="2" height="3" fill="#a42424"/><rect x="113" y="284" width="2" height="2" fill="#a42424"/><rect x="118" y="286" width="2" height="2" fill="#a42424"/><rect x="123" y="286" width="2" height="5" fill="#a42424"/><rect x="128" y="286" width="2" height="9" fill="#a42424"/><rect x="133" y="286" width="2" height="11" fill="#a42424"/><rect x="138" y="286" width="2" height="11" fill="#a42424"/><rect x="143" y="286" width="2" height="12" fill="#a42424"/><rect x="148" y="286" width="2" height="10" fill="#a42424"/><rect x="153" y="286" width="2" height="9" fill="#a42424"/><rect x="158" y="286" width="2" height="7" fill="#a42424"/><rect x="162" y="286" width="2" height="6" fill="#a42424"/><rect x="167" y="286" width="2" height="7" fill="#a42424"/><rect x="172" y="286" width="2" height="9" fill="#a42424"/><rect x="177" y="286" width="2" height="11" fill="#a42424"/><rect x="182" y="286" width="2" height="10" fill="#a42424"/><rect x="187" y="286" width="2" height="10" fill="#a42424"/><rect x="192" y="286" width="2" height="9" fill="#a42424"/><rect x="197" y="286" width="2" height="5" fill="#a42424"/><rect x="202" y="286" width="2" height="3" fill="#a42424"/><rect x="207" y="286" width="2" height="4" fill="#a42424"/><rect x="212" y="286" width="2" height="4" fill="#a42424"/><rect x="217" y="286" width="2" height="3" fill="#a42424"/><rect x="221" y="286" width="2" height="2" fill="#a42424"/><rect x="236" y="285" width="2" height="1" fill="#a42424"/><rect x="241" y="283" width="2" height="3" fill="#a42424"/><rect x="246" y="283" width="2" height="3" fill="#a42424"/><rect x="251" y="285" width="2" height="1" fill="#a42424"/><rect x="256" y="285" width="2" height="1" fill="#a42424"/><rect x="261" y="285" width="2" height="1" fill="#a42424"/><rect x="271" y="284" width="2" height="2" fill="#a42424"/><rect x="276" y="283" width="2" height="3" fill="#a42424"/><rect x="280" y="283" width="2" height="3" fill="#a42424"/><rect x="285" y="283" width="2" height="3" fill="#a42424"/><rect x="290" y="284" width="2" height="2" fill="#a42424"/><rect x="310" y="283" width="2" height="3" fill="#a42424"/><rect x="315" y="281" width="2" height="5" fill="#a42424"/><rect x="320" y="279" width="2" height="7" fill="#a42424"/><rect x="325" y="279" width="2" height="7" fill="#a42424"/><rect x="330" y="278" width="2" height="8" fill="#a42424"/><rect x="335" y="279" width="2" height="7" fill="#a42424"/><rect x="339" y="279" width="2" height="7" fill="#a42424"/><rect x="344" y="280" width="2" height="6" fill="#a42424"/><rect x="349" y="280" width="2" height="6" fill="#a42424"/><rect x="354" y="279" width="2" height="7" fill="#a42424"/><rect x="359" y="280" width="2" height="6" fill="#a42424"/><rect x="364" y="280" width="2" height="6" fill="#a42424"/><rect x="369" y="280" width="2" height="6" fill="#a42424"/><rect x="374" y="280" width="2" height="6" fill="#a42424"/><rect x="379" y="280" width="2" height="6" fill="#a42424"/><rect x="384" y="283" width="2" height="3" fill="#a42424"/><rect x="394" y="286" width="2" height="2" fill="#a42424"/><rect x="398" y="286" width="2" height="4" fill="#a42424"/><rect x="403" y="286" width="2" height="9" fill="#a42424"/><rect x="408" y="286" width="2" height="10" fill="#a42424"/><rect x="413" y="286" width="2" height="11" fill="#a42424"/><rect x="418" y="286" width="2" height="12" fill="#a42424"/><rect x="423" y="286" width="2" height="12" fill="#a42424"/><rect x="428" y="286" width="2" height="13" fill="#a42424"/><rect x="433" y="286" width="2" height="12" fill="#a42424"/><rect x="438" y="286" width="2" height="12" fill="#a42424"/><rect x="443" y="286" width="2" height="10" fill="#a42424"/><rect x="448" y="286" width="2" height="7" fill="#a42424"/><rect x="453" y="286" width="2" height="6" fill="#a42424"/><rect x="457" y="286" width="2" height="4" fill="#a42424"/><rect x="462" y="286" width="2" height="3" fill="#a42424"/><rect x="467" y="286" width="2" height="3" fill="#a42424"/><rect x="472" y="286" width="2" height="4" fill="#a42424"/><rect x="477" y="286" width="2" height="3" fill="#a42424"/><rect x="482" y="286" width="2" height="2" fill="#a42424"/><rect x="487" y="286" width="2" height="1" fill="#a42424"/><rect x="492" y="286" width="2" height="2" fill="#a42424"/><rect x="497" y="286" width="2" height="2" fill="#a42424"/><rect x="502" y="286" width="2" height="2" fill="#a42424"/><rect x="507" y="286" width="2" height="2" fill="#a42424"/><rect x="512" y="286" width="2" height="3" fill="#a42424"/><rect x="516" y="286" width="2" height="2" fill="#a42424"/><rect x="521" y="286" width="2" height="3" fill="#a42424"/><rect x="526" y="286" width="2" height="3" fill="#a42424"/><rect x="531" y="286" width="2" height="3" fill="#a42424"/><rect x="536" y="286" width="2" height="4" fill="#a42424"/><rect x="541" y="286" width="2" height="4" fill="#a42424"/><rect x="546" y="286" width="2" height="3" fill="#a42424"/><rect x="551" y="286" width="2" height="4" fill="#a42424"/><rect x="556" y="286" width="2" height="2" fill="#a42424"/><rect x="561" y="286" width="2" height="1" fill="#a42424"/><rect x="571" y="285" width="2" height="1" fill="#a42424"/><rect x="575" y="283" width="2" height="3" fill="#a42424"/><rect x="580" y="282" width="2" height="4" fill="#a42424"/><rect x="585" y="279" width="2" height="7" fill="#a42424"/><rect x="590" y="279" width="2" height="7" fill="#a42424"/><rect x="595" y="280" width="2" height="6" fill="#a42424"/><rect x="600" y="281" width="2" height="5" fill="#a42424"/><rect x="605" y="282" width="2" height="4" fill="#a42424"/><rect x="610" y="282" width="2" height="4" fill="#a42424"/><rect x="615" y="283" width="2" height="3" fill="#a42424"/><rect x="620" y="283" width="2" height="3" fill="#a42424"/><rect x="625" y="284" width="2" height="2" fill="#a42424"/><rect x="630" y="284" width="2" height="2" fill="#a42424"/><rect x="634" y="284" width="2" height="2" fill="#a42424"/><rect x="639" y="283" width="2" height="3" fill="#a42424"/><rect x="644" y="283" width="2" height="3" fill="#a42424"/><rect x="649" y="283" width="2" height="3" fill="#a42424"/><rect x="654" y="284" width="2" height="2" fill="#a42424"/><rect x="659" y="283" width="2" height="3" fill="#a42424"/><rect x="664" y="283" width="2" height="3" fill="#a42424"/><rect x="669" y="284" width="2" height="2" fill="#a42424"/><rect x="674" y="285" width="2" height="1" fill="#a42424"/><rect x="679" y="286" width="2" height="1" fill="#a42424"/><rect x="684" y="286" width="2" height="3" fill="#a42424"/><rect x="689" y="286" width="2" height="3" fill="#a42424"/><rect x="693" y="286" width="2" height="3" fill="#a42424"/><rect x="698" y="286" width="2" height="3" fill="#a42424"/><rect x="703" y="286" width="2" height="2" fill="#a42424"/><rect x="708" y="286" width="2" height="4" fill="#a42424"/><rect x="713" y="286" width="2" height="6" fill="#a42424"/><rect x="718" y="286" width="2" height="9" fill="#a42424"/><rect x="723" y="286" width="2" height="11" fill="#a42424"/><rect x="728" y="286" width="2" height="10" fill="#a42424"/><rect x="733" y="286" width="2" height="8" fill="#a42424"/><rect x="738" y="286" width="2" height="5" fill="#a42424"/><rect x="743" y="286" width="2" height="3" fill="#a42424"/><rect x="748" y="286" width="2" height="1" fill="#a42424"/><rect x="757" y="285" width="2" height="1" fill="#a42424"/><rect x="762" y="284" width="2" height="2" fill="#a42424"/><rect x="767" y="283" width="2" height="3" fill="#a42424"/><rect x="772" y="284" width="2" height="2" fill="#a42424"/><rect x="777" y="284" width="2" height="2" fill="#a42424"/><rect x="782" y="284" width="2" height="2" fill="#a42424"/><rect x="787" y="286" width="2" height="1" fill="#a42424"/><rect x="792" y="286" width="2" height="4" fill="#a42424"/><rect x="797" y="286" width="2" height="8" fill="#a42424"/><rect x="802" y="286" width="2" height="8" fill="#a42424"/><rect x="807" y="286" width="2" height="8" fill="#a42424"/><rect x="811" y="286" width="2" height="9" fill="#a42424"/><rect x="816" y="286" width="2" height="9" fill="#a42424"/><rect x="821" y="286" width="2" height="8" fill="#a42424"/><rect x="826" y="286" width="2" height="9" fill="#a42424"/><rect x="831" y="286" width="2" height="9" fill="#a42424"/><rect x="836" y="286" width="2" height="10" fill="#a42424"/><rect x="841" y="286" width="2" height="11" fill="#a42424"/><rect x="846" y="286" width="2" height="9" fill="#a42424"/><rect x="851" y="286" width="2" height="8" fill="#a42424"/><rect x="856" y="286" width="2" height="7" fill="#a42424"/><rect x="861" y="286" width="2" height="6" fill="#a42424"/><rect x="866" y="286" width="2" height="6" fill="#a42424"/><rect x="870" y="286" width="2" height="5" fill="#a42424"/></g>
<polyline points="14.2,280.2 25.6,280.2 30.8,278.4 37.1,277.9 41.25,275.8 51.7,274.3 56.9,273.5 67.3,270.8 75.6,268.5 80.8,266.5 88.1,262.5 93.3,261 97.5,260.2 114.2,260.2 118.3,264.4 124.6,270.6 130.2,276.9 135.4,280.5 143.75,285.2 153.1,287.3 158.3,286.25 162.5,286.25 167.7,289.4 172.9,294 177.1,297.9 182.3,299.3 187.5,301.4 193.75,301.4 202.1,298.2 210.4,300.3 217.7,300.3 225,298.2 233.3,296.1 245,293 257.5,293.75 263.75,294 267.9,292 276.25,288.9 284.6,288.1 290.8,287.3 295,288.9 303.3,288.9 308.5,287.8 311.7,283.6 316.9,280 324.2,276.4 334.6,272.7 342.9,270.4 351.25,267.5 357.5,264.9 365,263.3 370.2,261.25 375.4,260.2 379.6,258.1 383.75,259.7 390,264.4 398.3,269.1 403.5,275.8 410.8,281.6 419.2,287.3 427.5,293.5 435.8,298.2 444.2,299.3 453.5,298.2 460.8,296.1 469.2,298.2 475.4,298.2 485,296.1 493.3,296.7 500.6,298.2 510,298.75 523.5,300.3 531.9,300.8 537.1,302.9 547.5,303.4 551.7,304.5 557.9,302.9 566.25,299.8 573.5,297.2 580.8,294 586,288.3 589.2,286.25 594.4,285.7 599.6,285.4 605,285.2 610.2,282.9 630,282.9 638.3,280.5 648.75,279.2 655,278.4 663.3,276.4 673.75,276.4 681,278.4 688.3,281 694.6,282.6 702.9,282.6 709.2,284.7 714.4,287.8 719.6,293.5 725,296.7 735.4,296.7 740.6,294.6 746.9,292 755.2,288.9 759.4,287.3 768.75,285.4 776,284.7 781.8,283.1 786.5,285.7 791.7,290.4 797.8,296.6 807.2,300.3 815.6,302.9 821.8,304.5 827,308.6 834.2,311.8 840.4,315.9 852.9,317 859.2,318 869.6,319.1" fill="none" stroke="#0c0c60" stroke-width="1.6" stroke-linejoin="round" shape-rendering="crispEdges"/>
<g fill="#e02a2a"><circle cx="15.5" cy="284.37" r="1.6"/><circle cx="20.5" cy="283.1" r="1.6"/><circle cx="25.5" cy="282.51" r="1.6"/><circle cx="30.5" cy="281.09" r="1.6"/><circle cx="35.5" cy="280" r="1.6"/><circle cx="40.5" cy="279.04" r="1.6"/><circle cx="44.5" cy="278.55" r="1.6"/><circle cx="49.5" cy="277.62" r="1.6"/><circle cx="54.5" cy="277.5" r="1.6"/><circle cx="59.5" cy="276.56" r="1.6"/><circle cx="64.5" cy="275.54" r="1.6"/><circle cx="69.5" cy="274.39" r="1.6"/><circle cx="74.5" cy="273.55" r="1.6"/><circle cx="79.5" cy="271.62" r="1.6"/><circle cx="84.5" cy="270.6" r="1.6"/><circle cx="89.5" cy="268.59" r="1.6"/><circle cx="94.5" cy="266.65" r="1.6"/><circle cx="99.5" cy="265.52" r="1.6"/><circle cx="103.5" cy="264.67" r="1.6"/><circle cx="108.5" cy="263.61" r="1.6"/><circle cx="113.5" cy="262.52" r="1.6"/><circle cx="118.5" cy="262.5" r="1.6"/><circle cx="123.5" cy="264.3" r="1.6"/><circle cx="128.5" cy="266.21" r="1.6"/><circle cx="133.5" cy="268.15" r="1.6"/><circle cx="138.5" cy="270.78" r="1.6"/><circle cx="143.5" cy="273.09" r="1.6"/><circle cx="148.5" cy="276.1" r="1.6"/><circle cx="153.5" cy="278.36" r="1.6"/><circle cx="158.5" cy="279.42" r="1.6"/><circle cx="162.5" cy="280.2" r="1.6"/><circle cx="167.5" cy="282.5" r="1.6"/><circle cx="172.5" cy="284.54" r="1.6"/><circle cx="177.5" cy="287" r="1.6"/><circle cx="182.5" cy="289.08" r="1.6"/><circle cx="187.5" cy="291.28" r="1.6"/><circle cx="192.5" cy="292.8" r="1.6"/><circle cx="197.5" cy="294.46" r="1.6"/><circle cx="202.5" cy="295.58" r="1.6"/><circle cx="207.5" cy="295.6" r="1.6"/><circle cx="212.5" cy="296.41" r="1.6"/><circle cx="217.5" cy="297.46" r="1.6"/><circle cx="221.5" cy="297.23" r="1.6"/><circle cx="226.5" cy="297.64" r="1.6"/><circle cx="231.5" cy="297.23" r="1.6"/><circle cx="236.5" cy="296.75" r="1.6"/><circle cx="241.5" cy="296.53" r="1.6"/><circle cx="246.5" cy="295.62" r="1.6"/><circle cx="251.5" cy="294.66" r="1.6"/><circle cx="256.5" cy="294.6" r="1.6"/><circle cx="261.5" cy="294.79" r="1.6"/><circle cx="266.5" cy="293.42" r="1.6"/><circle cx="271.5" cy="292.71" r="1.6"/><circle cx="276.5" cy="292.32" r="1.6"/><circle cx="280.5" cy="291.83" r="1.6"/><circle cx="285.5" cy="290.74" r="1.6"/><circle cx="290.5" cy="289.48" r="1.6"/><circle cx="295.5" cy="289.4" r="1.6"/><circle cx="300.5" cy="289.4" r="1.6"/><circle cx="305.5" cy="288.5" r="1.6"/><circle cx="310.5" cy="288.5" r="1.6"/><circle cx="315.5" cy="286.38" r="1.6"/><circle cx="320.5" cy="284.85" r="1.6"/><circle cx="325.5" cy="283.36" r="1.6"/><circle cx="330.5" cy="281.76" r="1.6"/><circle cx="335.5" cy="279.55" r="1.6"/><circle cx="339.5" cy="277.93" r="1.6"/><circle cx="344.5" cy="275.55" r="1.6"/><circle cx="349.5" cy="274.43" r="1.6"/><circle cx="354.5" cy="272.84" r="1.6"/><circle cx="359.5" cy="270.84" r="1.6"/><circle cx="364.5" cy="269.51" r="1.6"/><circle cx="369.5" cy="267.39" r="1.6"/><circle cx="374.5" cy="266.33" r="1.6"/><circle cx="379.5" cy="264.64" r="1.6"/><circle cx="384.5" cy="263.38" r="1.6"/><circle cx="389.5" cy="263.3" r="1.6"/><circle cx="394.5" cy="264.54" r="1.6"/><circle cx="398.5" cy="265.09" r="1.6"/><circle cx="403.5" cy="267.07" r="1.6"/><circle cx="408.5" cy="269.29" r="1.6"/><circle cx="413.5" cy="271.93" r="1.6"/><circle cx="418.5" cy="275.23" r="1.6"/><circle cx="423.5" cy="278.17" r="1.6"/><circle cx="428.5" cy="281.23" r="1.6"/><circle cx="433.5" cy="284.53" r="1.6"/><circle cx="438.5" cy="287.05" r="1.6"/><circle cx="443.5" cy="289.33" r="1.6"/><circle cx="448.5" cy="291.34" r="1.6"/><circle cx="453.5" cy="292.5" r="1.6"/><circle cx="457.5" cy="293.26" r="1.6"/><circle cx="462.5" cy="293.5" r="1.6"/><circle cx="467.5" cy="294.47" r="1.6"/><circle cx="472.5" cy="294.6" r="1.6"/><circle cx="477.5" cy="295.05" r="1.6"/><circle cx="482.5" cy="295.1" r="1.6"/><circle cx="487.5" cy="295.1" r="1.6"/><circle cx="492.5" cy="295.1" r="1.6"/><circle cx="497.5" cy="295.1" r="1.6"/><circle cx="502.5" cy="296.45" r="1.6"/><circle cx="507.5" cy="296.5" r="1.6"/><circle cx="512.5" cy="296.5" r="1.6"/><circle cx="516.5" cy="297.02" r="1.6"/><circle cx="521.5" cy="297.2" r="1.6"/><circle cx="526.5" cy="297.2" r="1.6"/><circle cx="531.5" cy="298.12" r="1.6"/><circle cx="536.5" cy="298.2" r="1.6"/><circle cx="541.5" cy="299.23" r="1.6"/><circle cx="546.5" cy="300.2" r="1.6"/><circle cx="551.5" cy="300.3" r="1.6"/><circle cx="556.5" cy="301.32" r="1.6"/><circle cx="561.5" cy="300.32" r="1.6"/><circle cx="566.5" cy="300.3" r="1.6"/><circle cx="571.5" cy="299.4" r="1.6"/><circle cx="575.5" cy="299.3" r="1.6"/><circle cx="580.5" cy="297.77" r="1.6"/><circle cx="585.5" cy="295.36" r="1.6"/><circle cx="590.5" cy="293.57" r="1.6"/><circle cx="595.5" cy="291.65" r="1.6"/><circle cx="600.5" cy="290.42" r="1.6"/><circle cx="605.5" cy="289.31" r="1.6"/><circle cx="610.5" cy="287.38" r="1.6"/><circle cx="615.5" cy="286.23" r="1.6"/><circle cx="620.5" cy="285.42" r="1.6"/><circle cx="625.5" cy="285.4" r="1.6"/><circle cx="630.5" cy="285" r="1.6"/><circle cx="634.5" cy="283.54" r="1.6"/><circle cx="639.5" cy="283.26" r="1.6"/><circle cx="644.5" cy="282.69" r="1.6"/><circle cx="649.5" cy="281.66" r="1.6"/><circle cx="654.5" cy="280.61" r="1.6"/><circle cx="659.5" cy="280.5" r="1.6"/><circle cx="664.5" cy="279.58" r="1.6"/><circle cx="669.5" cy="278.77" r="1.6"/><circle cx="674.5" cy="277.48" r="1.6"/><circle cx="679.5" cy="276.9" r="1.6"/><circle cx="684.5" cy="277.09" r="1.6"/><circle cx="689.5" cy="278.42" r="1.6"/><circle cx="693.5" cy="279.27" r="1.6"/><circle cx="698.5" cy="279.5" r="1.6"/><circle cx="703.5" cy="280.39" r="1.6"/><circle cx="708.5" cy="280.5" r="1.6"/><circle cx="713.5" cy="281.52" r="1.6"/><circle cx="718.5" cy="282.95" r="1.6"/><circle cx="723.5" cy="285.09" r="1.6"/><circle cx="728.5" cy="286.59" r="1.6"/><circle cx="733.5" cy="288.74" r="1.6"/><circle cx="738.5" cy="290.23" r="1.6"/><circle cx="743.5" cy="290.4" r="1.6"/><circle cx="748.5" cy="290.4" r="1.6"/><circle cx="752.5" cy="290.4" r="1.6"/><circle cx="757.5" cy="289.51" r="1.6"/><circle cx="762.5" cy="288.94" r="1.6"/><circle cx="767.5" cy="288.52" r="1.6"/><circle cx="772.5" cy="287.39" r="1.6"/><circle cx="777.5" cy="286.37" r="1.6"/><circle cx="782.5" cy="285.34" r="1.6"/><circle cx="787.5" cy="285.3" r="1.6"/><circle cx="792.5" cy="286.71" r="1.6"/><circle cx="797.5" cy="288.77" r="1.6"/><circle cx="802.5" cy="290.34" r="1.6"/><circle cx="807.5" cy="292.22" r="1.6"/><circle cx="811.5" cy="293.03" r="1.6"/><circle cx="816.5" cy="294.62" r="1.6"/><circle cx="821.5" cy="296.75" r="1.6"/><circle cx="826.5" cy="298.99" r="1.6"/><circle cx="831.5" cy="301.14" r="1.6"/><circle cx="836.5" cy="303.23" r="1.6"/><circle cx="841.5" cy="305.37" r="1.6"/><circle cx="846.5" cy="307.33" r="1.6"/><circle cx="851.5" cy="309.06" r="1.6"/><circle cx="856.5" cy="310.53" r="1.6"/><circle cx="861.5" cy="312.2" r="1.6"/><circle cx="866.5" cy="313.2" r="1.6"/><circle cx="870.5" cy="314.27" r="1.6"/></g>
<text x="16" y="267" font-size="11" fill="#1c2a8a" textLength="28.5" lengthAdjust="spacingAndGlyphs">MACD</text>
<text x="899" y="293" font-size="11" fill="#f8f6f0" stroke="#f8f6f0" stroke-width="0.3">+0.000</text>
<g shape-rendering="crispEdges"><rect x="15" y="336" width="856" height="1" fill="#2a34a6"/><rect x="15" y="337" width="856" height="1" fill="#10148c"/><rect x="15" y="394" width="856" height="1" fill="#2a34a6"/><rect x="15" y="395" width="856" height="1" fill="#10148c"/></g>
<polyline points="14.5,360.4 19.7,358.8 25.7,358.2 30.5,351.2 35.4,355.5 39.2,352.8 44,349.6 49.4,356.6 54.3,352.3 58.6,349.1 64,347.4 69.4,342.6 73.7,341 79.1,338.3 84.5,332.9 88.9,330.7 94.8,335.6 99.7,331.8 102.9,338.3 104,341 108.3,338.3 113.7,344.7 116.4,356.1 119.1,365.8 123.4,377.2 128.2,375 132.6,374.5 135.8,375.5 142.3,379.3 143.9,378.8 147.7,370.7 150.9,368.5 153.1,368 158.5,362.6 161.7,361.5 164.4,368.5 167.1,379.9 170.4,384.7 174.7,388.5 177.4,390.1 182.3,380.4 187.7,380.9 192.5,380.9 196.3,372.3 202.2,364.7 208.2,376.6 212.5,379.3 217.9,375.5 226.5,366.9 229.8,368.5 233,369 236.3,371.2 241.1,363.6 245,364.7 251.5,370.7 256.9,370.7 261.2,378.2 266.6,362.6 270.9,364.7 276.9,361.5 280.6,363.1 289.3,362.6 295.2,376.1 300.1,366.3 305,368.5 309.8,352.8 315.2,344.2 320.6,352.8 324.9,351.2 330.3,347.4 334.7,347.4 340.1,349.6 344.4,347.4 348.7,342 353.6,339.3 359.5,343.7 363.8,341 369.3,332.3 374.7,338.8 379,336.6 380.7,338.8 382.8,351.2 385.5,357.7 389.8,363.1 394.2,364.2 399,365.3 402.3,374.5 412,381 425,385.3 428.7,388.5 434.1,379.9 439.5,378.8 443.9,378.8 448.2,372.3 457.9,372.3 462.8,369.6 467.1,384.2 477.3,367.4 482.8,372.8 485,372.8 489.3,373.4 493.6,375.5 501.2,379.3 507.7,380.9 512.5,383.1 517.4,380.4 521.7,380.9 526,383.1 531.5,385.3 536.9,392.6 541.2,392.6 546,388.5 550.9,393.4 553.1,386.3 555.8,375.5 560.6,371.75 566,371.2 572.5,366.3 576.8,363.6 581.1,358.2 585.5,340.4 589.8,351.2 595.2,369 600,362.6 605,362.6 610.4,356.3 614.7,359.9 620.1,363.1 625,359.3 630.4,364.2 636.3,359.3 639.6,358.2 644.4,351.8 649.3,355 653.6,356.6 659,355 664.4,347.4 669.8,353.4 674.1,356.1 679,364.7 683.9,367.4 689.3,372.3 694.7,366.3 699.5,360.4 703.8,363.6 707.1,370.7 713,377.7 717.3,388 720.6,390.7 723.2,392.6 727.6,376.6 729.2,375 733.5,372.8 738.9,367.4 743.2,361.5 748.6,359.3 753,361.5 757.8,358.2 762.7,363.4 767.5,357.2 772.4,366.3 777.3,360.4 782.1,358.8 787,375.5 792.4,382.6 797.2,389.6 802.1,379.3 812.4,379.3 817.8,384.2 822.1,382.3 826.7,391.2 830.2,390.2 835.6,393.4 838,395 842.1,393.4 846.5,384.7 850.8,386.9 856.2,389.4 861.6,393.4 866.4,388.5 870.8,391.2" fill="none" stroke="#e8902a" stroke-width="1" stroke-linejoin="round"/>
<polyline points="73.7,341 79.1,338.3 84.5,332.9 88.9,330.7 94.8,335.6 99.7,331.8" fill="none" stroke="#d030e0" stroke-width="1.2"/>
<polyline points="363.8,341 369.3,332.3 374.7,338.8 379,336.6" fill="none" stroke="#d030e0" stroke-width="1.2"/>
<polyline points="546,388.5 550.9,393.4" fill="none" stroke="#30d030" stroke-width="1.2"/>
<polyline points="830.2,390.2 835.6,393.4" fill="none" stroke="#30d030" stroke-width="1.2"/>
<rect x="15" y="331" width="17" height="9" fill="#3a4048"/>
<text x="16.5" y="340" font-size="11" fill="#e8902a" textLength="15" lengthAdjust="spacingAndGlyphs">RSI</text>
<text x="898" y="358" font-size="11" fill="#f8f6f0" stroke="#f8f6f0" stroke-width="0.3">60</text>
<text x="898" y="386" font-size="11" fill="#f8f6f0" stroke="#f8f6f0" stroke-width="0.3">40</text>
<path d="M14.5,375.5 H72.5 L74.5,377.5 V393 L72.5,395 H14.5 Z" fill="#5d6e87" stroke="#b4c2d0" stroke-width="1.2"/>
<rect x="14" y="375" width="2" height="27" fill="#c4ecdc"/>
<text x="22.3" y="389" font-size="11" fill="#f2f4f6" stroke="#f2f4f6" stroke-width="0.25" textLength="44.5" lengthAdjust="spacing">Авг 2020</text>
<path d="M364.5,375.5 H422.5 L424.5,377.5 V393 L422.5,395 H364.5 Z" fill="#5d6e87" stroke="#b4c2d0" stroke-width="1.2"/>
<rect x="364" y="375" width="2" height="27" fill="#c4ecdc"/>
<text x="372.3" y="389" font-size="11" fill="#f2f4f6" stroke="#f2f4f6" stroke-width="0.25" textLength="46.3" lengthAdjust="spacing">Сен 2020</text>
<text x="39.5" y="421" font-size="11" fill="#f6f2e8" stroke="#f6f2e8" stroke-width="0.3" text-anchor="middle">17</text>
<text x="68.5" y="421" font-size="11" fill="#f6f2e8" stroke="#f6f2e8" stroke-width="0.3" text-anchor="middle">18</text>
<text x="98.5" y="421" font-size="11" fill="#f6f2e8" stroke="#f6f2e8" stroke-width="0.3" text-anchor="middle">19</text>
<text x="127.5" y="421" font-size="11" fill="#f6f2e8" stroke="#f6f2e8" stroke-width="0.3" text-anchor="middle">20</text>
<text x="157.5" y="421" font-size="11" fill="#f6f2e8" stroke="#f6f2e8" stroke-width="0.3" text-anchor="middle">21</text>
<text x="186.5" y="421" font-size="11" fill="#f6f2e8" stroke="#f6f2e8" stroke-width="0.3" text-anchor="middle">24</text>
<text x="216.5" y="421" font-size="11" fill="#f6f2e8" stroke="#f6f2e8" stroke-width="0.3" text-anchor="middle">25</text>
<text x="245.5" y="421" font-size="11" fill="#f6f2e8" stroke="#f6f2e8" stroke-width="0.3" text-anchor="middle">26</text>
<text x="275.5" y="421" font-size="11" fill="#f6f2e8" stroke="#f6f2e8" stroke-width="0.3" text-anchor="middle">27</text>
<text x="304.5" y="421" font-size="11" fill="#f6f2e8" stroke="#f6f2e8" stroke-width="0.3" text-anchor="middle">28</text>
<text x="334.5" y="421" font-size="11" fill="#f6f2e8" stroke="#f6f2e8" stroke-width="0.3" text-anchor="middle">31</text>
<text x="363.5" y="421" font-size="11" fill="#f6f2e8" stroke="#f6f2e8" stroke-width="0.3" text-anchor="middle">1</text>
<text x="393.5" y="421" font-size="11" fill="#f6f2e8" stroke="#f6f2e8" stroke-width="0.3" text-anchor="middle">2</text>
<text x="422.5" y="421" font-size="11" fill="#f6f2e8" stroke="#f6f2e8" stroke-width="0.3" text-anchor="middle">3</text>
<text x="452.5" y="421" font-size="11" fill="#f6f2e8" stroke="#f6f2e8" stroke-width="0.3" text-anchor="middle">4</text>
<text x="481.5" y="421" font-size="11" fill="#f6f2e8" stroke="#f6f2e8" stroke-width="0.3" text-anchor="middle">7</text>
<text x="511.5" y="421" font-size="11" fill="#f6f2e8" stroke="#f6f2e8" stroke-width="0.3" text-anchor="middle">8</text>
<text x="540.5" y="421" font-size="11" fill="#f6f2e8" stroke="#f6f2e8" stroke-width="0.3" text-anchor="middle">9</text>
<text x="570.5" y="421" font-size="11" fill="#f6f2e8" stroke="#f6f2e8" stroke-width="0.3" text-anchor="middle">10</text>
<text x="599.5" y="421" font-size="11" fill="#f6f2e8" stroke="#f6f2e8" stroke-width="0.3" text-anchor="middle">11</text>
<text x="629.5" y="421" font-size="11" fill="#f6f2e8" stroke="#f6f2e8" stroke-width="0.3" text-anchor="middle">14</text>
<text x="658.5" y="421" font-size="11" fill="#f6f2e8" stroke="#f6f2e8" stroke-width="0.3" text-anchor="middle">15</text>
<text x="688.5" y="421" font-size="11" fill="#f6f2e8" stroke="#f6f2e8" stroke-width="0.3" text-anchor="middle">16</text>
<text x="717.5" y="421" font-size="11" fill="#f6f2e8" stroke="#f6f2e8" stroke-width="0.3" text-anchor="middle">17</text>
<text x="747.5" y="421" font-size="11" fill="#f6f2e8" stroke="#f6f2e8" stroke-width="0.3" text-anchor="middle">18</text>
<text x="776.5" y="421" font-size="11" fill="#f6f2e8" stroke="#f6f2e8" stroke-width="0.3" text-anchor="middle">21</text>
<text x="806.5" y="421" font-size="11" fill="#f6f2e8" stroke="#f6f2e8" stroke-width="0.3" text-anchor="middle">22</text>
<text x="835.5" y="421" font-size="11" fill="#f6f2e8" stroke="#f6f2e8" stroke-width="0.3" text-anchor="middle">23</text>
<text x="865.5" y="421" font-size="11" fill="#f6f2e8" stroke="#f6f2e8" stroke-width="0.3" text-anchor="middle">24</text>
<text x="26" y="21" font-size="12" fill="#1a1a2a" xml:space="preserve" textLength="141" lengthAdjust="spacingAndGlyphs">График EUR /USD  4 ЧАСА</text>
<g shape-rendering="crispEdges"><rect x="7" y="9" width="1" height="14" fill="#4d6784"/><rect x="7" y="22" width="14" height="1" fill="#4d6784"/><rect x="6" y="10" width="3" height="1" fill="#4d6784"/><rect x="20" y="21" width="1" height="3" fill="#4d6784"/><rect x="11" y="13" width="1" height="8" fill="#2c4a34"/><rect x="10" y="15" width="3" height="4" fill="#3c7a3c"/><rect x="11" y="16" width="1" height="2" fill="#a8d890"/><rect x="15" y="8" width="1" height="10" fill="#2c4a34"/><rect x="14" y="10" width="3" height="6" fill="#3c7a3c"/><rect x="15" y="11" width="1" height="4" fill="#b0e098"/><rect x="19" y="11" width="1" height="9" fill="#3c3a4a"/><rect x="18" y="13" width="3" height="5" fill="#6a4a5a"/><rect x="19" y="14" width="1" height="3" fill="#c07890"/></g>
<rect x="847.5" y="8.5" width="30" height="16" rx="2.5" fill="url(#btn)" stroke="#4a5a70"/>
<rect x="857.5" y="16.5" width="10" height="4" rx="1.2" fill="#ffffff" stroke="#303a48"/>
<rect x="880.5" y="8.5" width="30" height="16" rx="2.5" fill="url(#btn)" stroke="#4a5a70"/>
<rect x="890.5" y="12.5" width="10" height="8" rx="1" fill="#ffffff" stroke="#303a48"/>
<rect x="893" y="15" width="5" height="2.5" fill="#3a4450"/>
<rect x="913.5" y="8.5" width="30" height="16" rx="2.5" fill="url(#cls)" stroke="#3a1010"/>
<path d="M924.5,13.3 L932.3,19.6 M932.3,13.3 L924.5,19.6" stroke="#4a2424" stroke-width="4.2" stroke-linecap="square"/>
<path d="M924.5,13.3 L932.3,19.6 M932.3,13.3 L924.5,19.6" stroke="#ffffff" stroke-width="2.6" stroke-linecap="square"/>
</svg></body></html>
